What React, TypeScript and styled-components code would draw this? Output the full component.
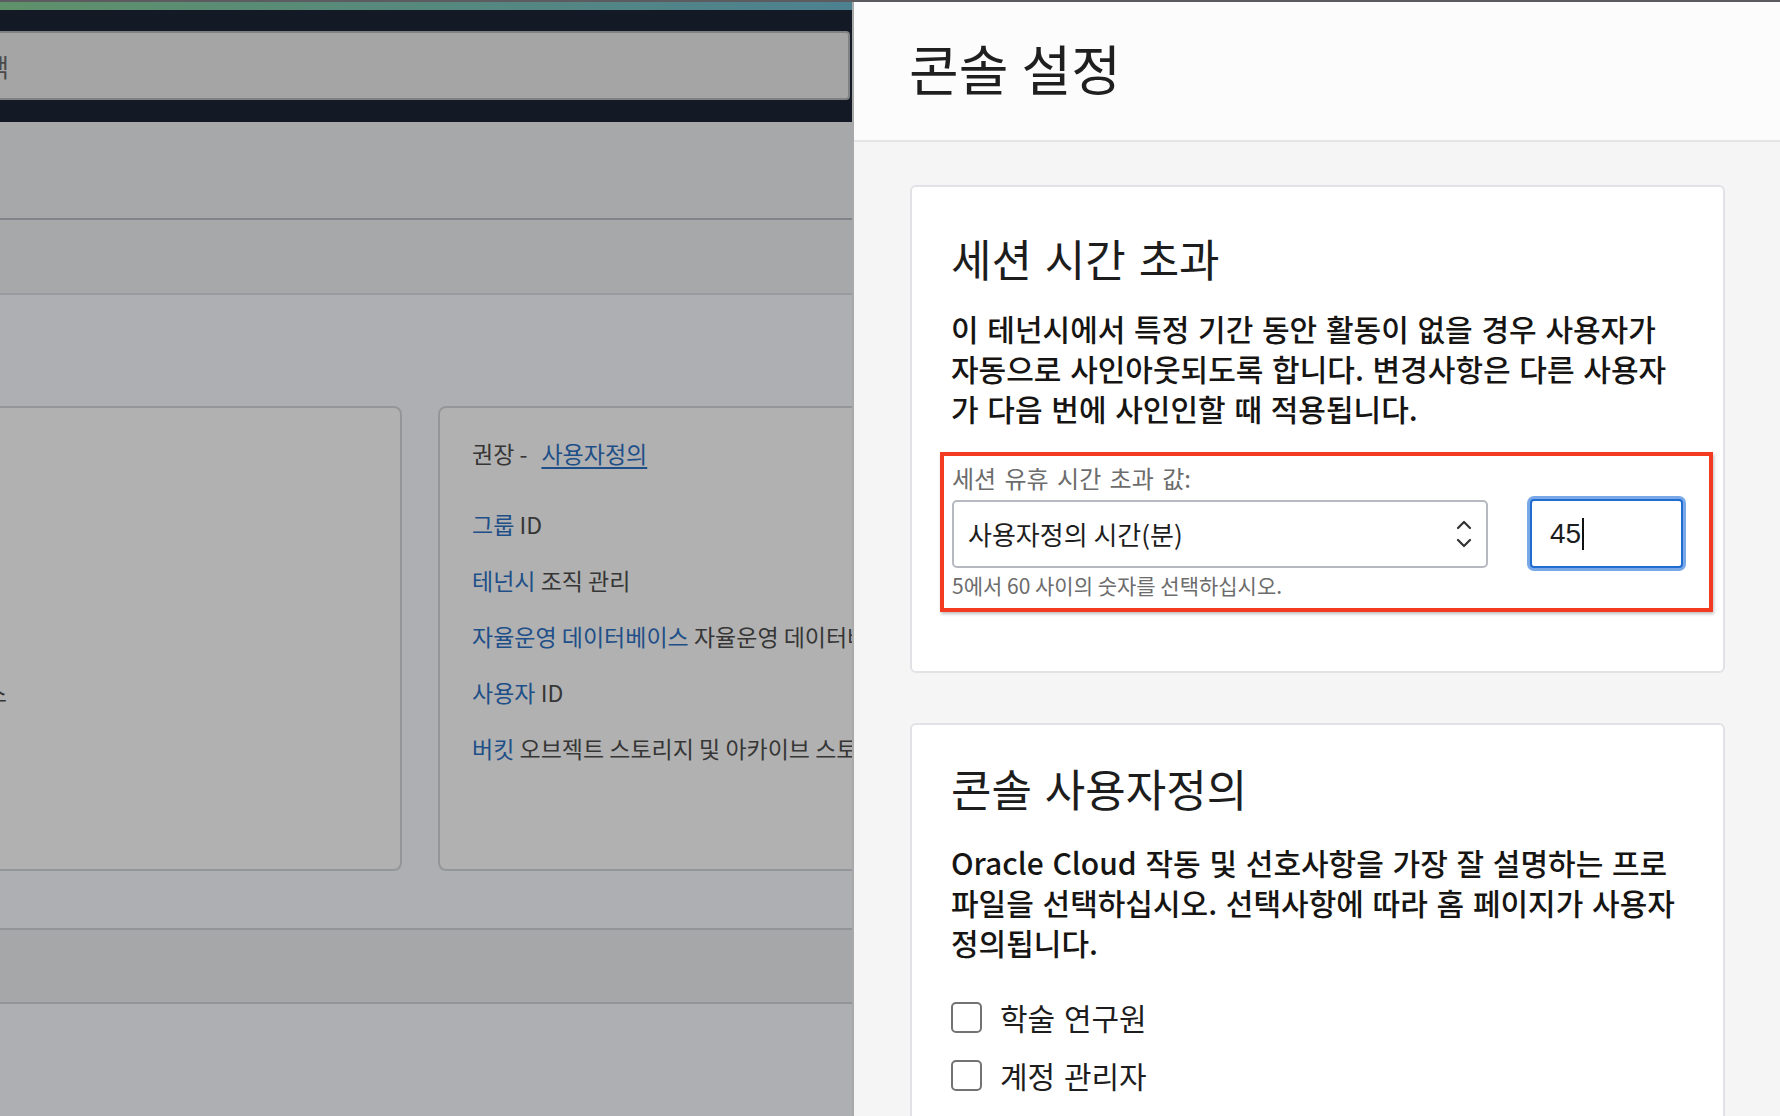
import React from "react";
import styled, { createGlobalStyle } from "styled-components";

const KO = `"Noto Sans CJK KR", "Noto Sans", sans-serif`;

const GlobalStyle = createGlobalStyle`
  html, body {
    margin: 0;
    padding: 0;
  }
  body {
    width: 1780px;
    height: 1116px;
    overflow: hidden;
    font-family: ${KO};
    background: #aeafb3;
  }
`;

const Screen = styled.div`
  display: flex;
  flex-direction: column;
  width: 1780px;
  height: 1116px;
`;

const TopLine = styled.div`
  height: 2px;
  background: #5c5c60;
  flex-shrink: 0;
`;

const Split = styled.div`
  display: flex;
  flex: 1;
  min-height: 0;
`;

/* ---------- dimmed page behind the drawer ---------- */

const Backdrop = styled.div`
  width: 852px;
  flex-shrink: 0;
  display: flex;
  flex-direction: column;
  overflow: hidden;
  background: #aeafb3;
`;

const Accent = styled.div`
  height: 8px;
  flex-shrink: 0;
  background: linear-gradient(90deg, #5f916a, #4d8190);
`;

const NavBar = styled.div`
  background: #141a25;
  padding: 21px 0 22px;
  flex-shrink: 0;
`;

const SearchBox = styled.div`
  box-sizing: border-box;
  margin-left: -80px;
  width: 930px;
  height: 69px;
  display: flex;
  align-items: center;
  padding-left: 41px;
  background: #a5a5a5;
  border: 2px solid #808184;
  border-radius: 4px;
  font-size: 25px;
  color: #4a4a4a;
`;

const Band = styled.div<{ $h: number; $line: string }>`
  height: ${(p) => p.$h}px;
  flex-shrink: 0;
  background: #a7a8aa;
  border-bottom: 2px solid ${(p) => p.$line};
`;

const Content = styled.div`
  flex: 1;
  padding-top: 111px;
`;

const CardRow = styled.div`
  display: flex;
  gap: 36px;
  margin-left: -154px;
`;

const ServiceCard = styled.div<{ $w: number }>`
  box-sizing: border-box;
  width: ${(p) => p.$w}px;
  flex-shrink: 0;
  height: 465px;
  padding: 29px 0 0 32px;
  background: #b1b1b1;
  border: 2px solid #95969a;
  border-radius: 8px;
  display: flex;
  flex-direction: column;
  gap: 24px;
`;

const ServiceRow = styled.div<{ $lead?: boolean }>`
  font-size: 23px;
  line-height: 32px;
  height: 32px;
  white-space: nowrap;
  color: #363636;
  margin-bottom: ${(p) => (p.$lead ? 15 : 0)}px;
`;

const DimLink = styled.span<{ $underline?: boolean }>`
  color: #1e4f88;
  text-decoration: ${(p) => (p.$underline ? "underline" : "none")};
  text-underline-offset: 4px;
  margin-left: ${(p) => (p.$underline ? 14 : 0)}px;
`;

const FooterBand = styled.div`
  margin-top: 57px;
  height: 72px;
  background: #a6a7a8;
  border-top: 2px solid #939498;
  border-bottom: 2px solid #939498;
`;

/* ---------- settings drawer ---------- */

const Panel = styled.div`
  flex: 1;
  display: flex;
  flex-direction: column;
  border-left: 2px solid #a9a9a9;
  overflow: hidden;
  background: #f5f5f5;
`;

const PanelHeader = styled.div`
  box-sizing: border-box;
  height: 140px;
  flex-shrink: 0;
  display: flex;
  align-items: center;
  padding: 0 0 6px 55px;
  background: #fcfcfc;
  border-bottom: 2px solid #e4e4e6;
`;

const PanelTitle = styled.h1`
  margin: 0;
  font-size: 54px;
  line-height: 62px;
  font-weight: 400;
  word-spacing: 1px;
  color: #1f1f1f;
`;

const PanelBody = styled.div`
  display: flex;
  flex-direction: column;
  gap: 50px;
  padding: 43px 55px 0 56px;
`;

const SettingsCard = styled.section<{ $top: number; $bottom?: number }>`
  background: #ffffff;
  border: 2px solid #e2e2e6;
  border-radius: 6px;
  padding: ${(p) => p.$top}px 39px ${(p) => p.$bottom ?? 0}px;
  flex-shrink: 0;
`;

const CardTitle = styled.h2`
  margin: 0;
  font-size: 44px;
  line-height: 48px;
  font-weight: 400;
  word-spacing: 3px;
  color: #1d1d1d;
`;

const CardText = styled.p<{ $gap: number }>`
  margin: ${(p) => p.$gap}px 0 0;
  font-size: 30px;
  line-height: 40px;
  font-weight: 500;
  word-spacing: 2px;
  white-space: nowrap;
  color: #161513;
`;

const FieldFrame = styled.div`
  margin: 24px -29px 0 -11px;
  padding: 7px 24px 10px 8px;
  border: 4px solid #f33b22;
  box-shadow: 1px 2px 3px rgba(0, 0, 0, 0.25);
`;

const FieldLabel = styled.div`
  font-size: 24px;
  line-height: 30px;
  word-spacing: 3px;
  color: #6c6c6c;
`;

const FieldRow = styled.div`
  margin-top: 6px;
  display: flex;
  align-items: center;
  gap: 42px;
`;

const SelectBox = styled.div`
  box-sizing: border-box;
  width: 536px;
  height: 68px;
  display: flex;
  align-items: center;
  justify-content: space-between;
  padding: 0 14px;
  background: #ffffff;
  border: 2px solid #b6b9bf;
  border-radius: 5px;
  font-size: 26px;
  color: #1d1d1d;
`;

const NumberBox = styled.div`
  box-sizing: border-box;
  width: 153px;
  height: 69px;
  display: flex;
  align-items: center;
  padding-left: 18px;
  background: #ffffff;
  border: 2px solid #1f6dd1;
  border-radius: 4px;
  box-shadow: 0 0 0 3px #79a8e8;
  font-family: "Liberation Sans", Arial, sans-serif;
  font-size: 28px;
  color: #1d1d1d;
`;

const Caret = styled.span`
  display: inline-block;
  width: 2px;
  height: 32px;
  margin-left: 1px;
  background: #111111;
`;

const Hint = styled.div`
  margin-top: 4px;
  font-size: 21px;
  line-height: 26px;
  color: #6c6c6c;
`;

const CheckList = styled.div`
  margin-top: 39px;
  display: flex;
  flex-direction: column;
  gap: 26px;
`;

const CheckRow = styled.label`
  display: flex;
  align-items: center;
  gap: 18px;
  font-size: 30px;
  line-height: 32px;
  word-spacing: 2px;
  color: #1d1d1d;
`;

const CheckBox = styled.span`
  box-sizing: border-box;
  width: 31px;
  height: 31px;
  flex-shrink: 0;
  border: 2px solid #737373;
  border-radius: 5px;
  background: #ffffff;
`;

const Chevrons = () => (
  <svg width="16" height="28" viewBox="0 0 16 28" fill="none">
    <path d="M2 8 L8 2 L14 8" stroke="#333" strokeWidth="2.2" strokeLinecap="round" strokeLinejoin="round" />
    <path d="M2 20 L8 26 L14 20" stroke="#333" strokeWidth="2.2" strokeLinecap="round" strokeLinejoin="round" />
  </svg>
);

const leftRows = ["컴퓨트", "네트워킹", "ID 및 보안", "스토리지", "데이터베이스"];

const App = () => {
  return (
    <>
      <GlobalStyle />
      <Screen>
        <TopLine />
        <Split>
          <Backdrop>
            <Accent />
            <NavBar>
              <SearchBox>검색</SearchBox>
            </NavBar>
            <Band $h={96} $line="#7f858b" />
            <Band $h={73} $line="#9a9b9e" />
            <Content>
              <CardRow>
                <ServiceCard $w={556}>
                  {leftRows.map((r, i) => (
                    <ServiceRow key={r} $lead={i === 0}>
                      {r}
                    </ServiceRow>
                  ))}
                </ServiceCard>
                <ServiceCard $w={640}>
                  <ServiceRow $lead>
                    권장 -<DimLink $underline>사용자정의</DimLink>
                  </ServiceRow>
                  <ServiceRow>
                    <DimLink>그룹</DimLink> ID
                  </ServiceRow>
                  <ServiceRow>
                    <DimLink>테넌시</DimLink> 조직 관리
                  </ServiceRow>
                  <ServiceRow>
                    <DimLink>자율운영 데이터베이스</DimLink> 자율운영 데이터베이스
                  </ServiceRow>
                  <ServiceRow>
                    <DimLink>사용자</DimLink> ID
                  </ServiceRow>
                  <ServiceRow>
                    <DimLink>버킷</DimLink> 오브젝트 스토리지 및 아카이브 스토리지
                  </ServiceRow>
                </ServiceCard>
              </CardRow>
              <FooterBand />
            </Content>
          </Backdrop>

          <Panel>
            <PanelHeader>
              <PanelTitle>콘솔 설정</PanelTitle>
            </PanelHeader>
            <PanelBody>
              <SettingsCard $top={47} $bottom={59}>
                <CardTitle>세션 시간 초과</CardTitle>
                <CardText $gap={26}>
                  이 테넌시에서 특정 기간 동안 활동이 없을 경우 사용자가
                  <br />
                  자동으로 사인아웃되도록 합니다. 변경사항은 다른 사용자
                  <br />가 다음 번에 사인인할 때 적용됩니다.
                </CardText>
                <FieldFrame>
                  <FieldLabel>세션 유휴 시간 초과 값:</FieldLabel>
                  <FieldRow>
                    <SelectBox>
                      <span>사용자정의 시간(분)</span>
                      <Chevrons />
                    </SelectBox>
                    <NumberBox>
                      45
                      <Caret />
                    </NumberBox>
                  </FieldRow>
                  <Hint>5에서 60 사이의 숫자를 선택하십시오.</Hint>
                </FieldFrame>
              </SettingsCard>

              <SettingsCard $top={39} $bottom={40}>
                <CardTitle>콘솔 사용자정의</CardTitle>
                <CardText $gap={30}>
                  Oracle Cloud 작동 및 선호사항을 가장 잘 설명하는 프로
                  <br />
                  파일을 선택하십시오. 선택사항에 따라 홈 페이지가 사용자
                  <br />
                  정의됩니다.
                </CardText>
                <CheckList>
                  <CheckRow>
                    <CheckBox />
                    학술 연구원
                  </CheckRow>
                  <CheckRow>
                    <CheckBox />
                    계정 관리자
                  </CheckRow>
                </CheckList>
              </SettingsCard>
            </PanelBody>
          </Panel>
        </Split>
      </Screen>
    </>
  );
};

export default App;
